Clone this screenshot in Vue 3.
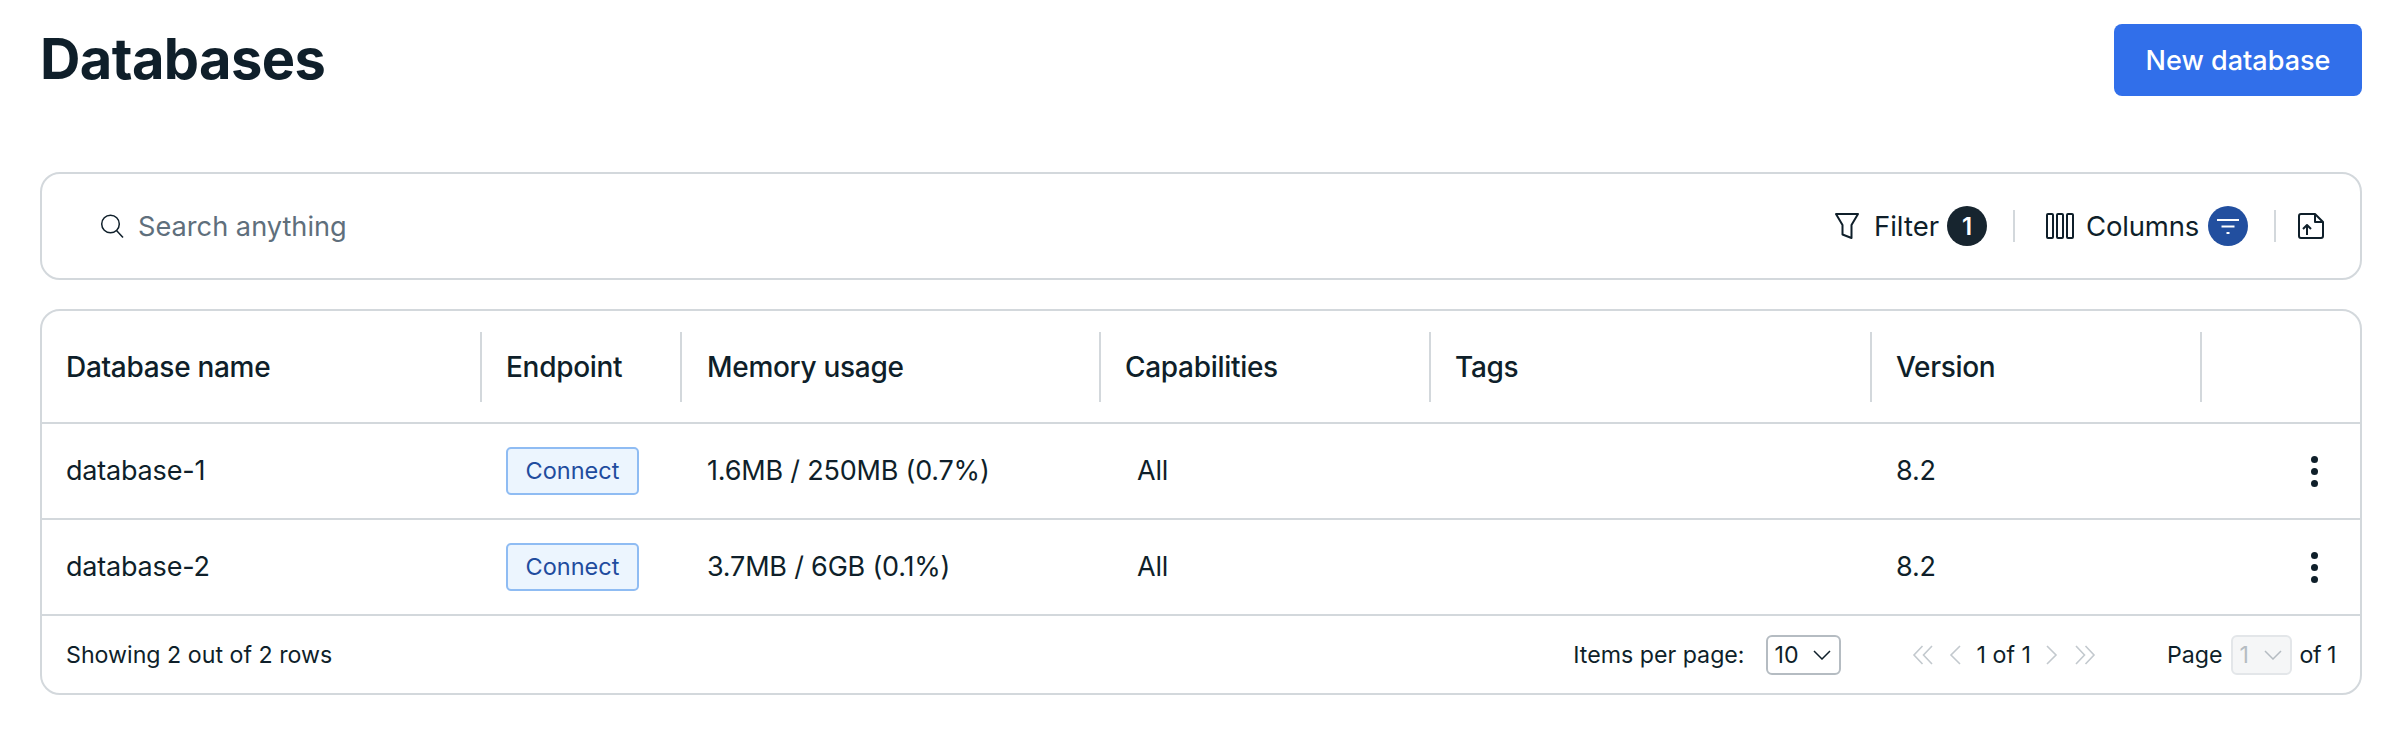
<template>
  <div class="page">
    <header class="page-header">
      <h1>Databases</h1>
      <button class="primary-btn">New database</button>
    </header>

    <div class="toolbar">
      <div class="search">
        <svg class="search-icon" viewBox="0 0 24 24" fill="none" stroke="#0f1f2a" stroke-width="1.5">
          <circle cx="10.500" cy="10" r="8.800" />
          <path d="M16.500 16.500l6.500 7" />
        </svg>
        <span class="search-text">Search anything</span>
      </div>
      <div class="tools">
        <div class="tool">
          <svg class="icon filter-icon" viewBox="0 0 24 26" fill="none" stroke="#0f1f2a" stroke-width="2" stroke-linejoin="round">
            <path d="M1 1h22l-6.500 11v13L7.500 21.500V12z" />
          </svg>
          <span class="tool-label">Filter</span>
          <span class="badge dark">1</span>
        </div>
        <span class="divider first"></span>
        <div class="tool columns-tool">
          <svg class="icon columns-icon" viewBox="0 0 28 26" fill="none" stroke="#0f1f2a" stroke-width="2">
            <rect x="1" y="1" width="6" height="24" rx="1" />
            <rect x="11" y="1" width="6" height="24" rx="1" />
            <rect x="21" y="1" width="6" height="24" rx="1" />
          </svg>
          <span class="tool-label columns-label">Columns</span>
          <span class="badge blue">
            <svg viewBox="0 0 22 16" width="22" height="16" fill="none" stroke="#fff" stroke-width="2">
              <path d="M0 2h22M4.500 8.500h13M9.500 15h3" />
            </svg>
          </span>
        </div>
        <span class="divider last"></span>
        <svg class="icon upload-icon" viewBox="0 0 26 26" fill="none" stroke="#0f1f2a" stroke-width="2" stroke-linejoin="round">
          <path d="M3 1h14l8 8v14a2 2 0 0 1-2 2H3a2 2 0 0 1-2-2V3a2 2 0 0 1 2-2z" />
          <path d="M17 1v8h8" />
          <path d="M9 22V12M5 16l4-4 4 4" />
        </svg>
      </div>
    </div>

    <div class="table-card">
      <div class="row head">
        <div v-for="col in columns" :key="col" class="cell"><span class="head-text">{{ col }}</span></div>
        <div class="cell"></div>
      </div>
      <div v-for="db in databases" :key="db.name" class="row body">
        <div class="cell text">{{ db.name }}</div>
        <div class="cell"><button class="connect">Connect</button></div>
        <div class="cell text">{{ db.memory }}</div>
        <div class="cell text caps">All</div>
        <div class="cell"></div>
        <div class="cell text">{{ db.version }}</div>
        <div class="cell kebab-cell">
          <span class="kebab"><i></i><i></i><i></i></span>
        </div>
      </div>
      <footer class="table-footer">
        <span>Showing 2 out of 2 rows</span>
        <div class="pager">
          <span>Items per page:</span>
          <span class="select per-page">10
            <svg viewBox="0 0 18 10" width="18" height="10" fill="none" stroke="#0f1f2a" stroke-width="1.500"><path d="M1 1l8 8 8-8" /></svg>
          </span>
          <div class="nav">
            <svg viewBox="0 0 22 20" width="22" height="20" fill="none" stroke="#c3c9ce" stroke-width="1.600"><path d="M10.500 1L2 10l8.500 9M20 1l-8.500 9 8.500 9" /></svg>
            <svg viewBox="0 0 12 20" width="12" height="20" fill="none" stroke="#c3c9ce" stroke-width="1.600"><path d="M11 1L2 10l9 9" /></svg>
            <span class="page-of">1 of 1</span>
            <svg viewBox="0 0 12 20" width="12" height="20" fill="none" stroke="#c3c9ce" stroke-width="1.600"><path d="M1 1l9 9-9 9" /></svg>
            <svg viewBox="0 0 22 20" width="22" height="20" fill="none" stroke="#c3c9ce" stroke-width="1.600"><path d="M2 1l8.500 9-8.500 9M11.500 1l8.500 9-8.500 9" /></svg>
          </div>
          <div class="page-pick">
            <span>Page</span>
            <span class="select disabled">1
              <svg viewBox="0 0 18 10" width="18" height="10" fill="none" stroke="#b5bcc2" stroke-width="1.500"><path d="M1 1l8 8 8-8" /></svg>
            </span>
            <span class="of-total">of 1</span>
          </div>
        </div>
      </footer>
    </div>
  </div>
</template>

<script setup>
const columns = ['Database name', 'Endpoint', 'Memory usage', 'Capabilities', 'Tags', 'Version']

const databases = [
  { name: 'database-1', memory: '1.6MB / 250MB (0.7%)', version: '8.2' },
  { name: 'database-2', memory: '3.7MB / 6GB (0.1%)', version: '8.2' }
]
</script>

<style scoped>
.page {
  width: 2400px;
  height: 740px;
  box-sizing: border-box;
  padding: 24px 38px 0 40px;
  background: #fff;
  color: #0f1f2a;
  font-family: Inter, "Liberation Sans", sans-serif;
  font-size: 27px;
}

.page-header {
  display: flex;
  align-items: center;
  justify-content: space-between;
  height: 72px;
  margin-bottom: 76px;
}

h1 {
  margin: 0;
  font-size: 56px;
  font-weight: 700;
  letter-spacing: -0.6px;
  line-height: 68px;
  padding-bottom: 2px;
}

.primary-btn {
  width: 248px;
  height: 72px;
  border: none;
  border-radius: 8px;
  background: #316fea;
  color: #fff;
  font: inherit;
  font-weight: 500;
}

.toolbar {
  display: flex;
  align-items: center;
  justify-content: space-between;
  box-sizing: border-box;
  height: 108px;
  margin-bottom: 29px;
  padding: 0 36px 0 58px;
  border: 2px solid #d3d8dc;
  border-radius: 20px;
}

.search {
  display: flex;
  align-items: center;
  gap: 14px;
}

.search-icon {
  width: 24px;
  height: 24px;
}

.search-text {
  color: #5f6f7c;
  font-size: 27.200px;
}

.tools {
  display: flex;
  align-items: center;
}

.tool {
  display: flex;
  align-items: center;
}

.tool-label {
  font-size: 27.500px;
}

.columns-label {
  letter-spacing: -0.2px;
}

.icon {
  display: block;
  height: 26px;
}

.filter-icon {
  width: 24px;
  margin-right: 15px;
}

.columns-icon {
  width: 28px;
  margin-right: 12px;
}

.upload-icon {
  width: 26px;
}

.badge {
  display: flex;
  align-items: center;
  justify-content: center;
  width: 40px;
  height: 40px;
  margin-left: 9px;
  border-radius: 50%;
  color: #fff;
  font-size: 24px;
  font-weight: 600;
}

.badge.dark {
  margin-left: 8px;
  background: #17252f;
}

.badge.blue {
  background: #224f9f;
}

.divider {
  width: 2px;
  height: 32px;
  margin: 0 26px;
  background: #d3d8dc;
}

.divider.first {
  margin-right: 31px;
}

.divider.last {
  margin-right: 22px;
}

.table-card {
  box-sizing: border-box;
  height: 386px;
  border: 2px solid #d3d8dc;
  border-radius: 20px;
}

.row {
  display: grid;
  grid-template-columns: 440px 200px 419px 330px 441px 330px 1fr;
  border-bottom: 2px solid #d3d8dc;
}

.row.head {
  height: 113px;
  box-sizing: border-box;
  align-items: center;
  font-size: 28px;
  font-weight: 500;
  letter-spacing: -0.3px;
}

.row.body {
  height: 96px;
  box-sizing: border-box;
  align-items: center;
  letter-spacing: -0.2px;
}

.cell {
  padding-left: 24px;
}

.cell:nth-child(3) {
  padding-left: 25px;
}

.cell.text {
  padding-bottom: 2px;
}

.head .cell {
  display: flex;
  align-items: center;
  box-sizing: border-box;
  height: 70px;
  border-right: 2px solid #d3d8dc;
}

.head .cell:last-child {
  border-right: none;
}

.cell.caps {
  padding-left: 36px;
}

.connect {
  display: block;
  width: 133px;
  height: 48px;
  border: 2px solid #8fbcf3;
  border-radius: 5px;
  background: #ecf5fe;
  color: #1f4c9e;
  font: inherit;
  font-size: 23.500px;
  padding: 0 0 2px;
}

.kebab-cell {
  display: flex;
  justify-content: flex-end;
  padding-right: 42px;
}

.kebab {
  display: flex;
  flex-direction: column;
  gap: 5px;
}

.kebab i {
  display: block;
  width: 7px;
  height: 7px;
  border-radius: 50%;
  background: #0f1f2a;
}

.table-footer {
  display: flex;
  align-items: center;
  justify-content: space-between;
  height: 78px;
  padding: 0 24px;
  font-size: 23.200px;
}

.pager {
  display: flex;
  align-items: center;
}

.select {
  display: flex;
  align-items: center;
  justify-content: space-between;
  box-sizing: border-box;
  height: 40px;
  padding: 0 8px 0 7px;
  border: 2px solid #b5bcc2;
  border-radius: 6px;
}

.per-page {
  width: 75px;
  margin-left: 21px;
}

.nav {
  display: flex;
  align-items: center;
  margin-left: 71px;
  gap: 15.500px;
}

.page-pick {
  display: flex;
  align-items: center;
  gap: 8px;
  margin-left: 71px;
}

.of-total {
  letter-spacing: -0.5px;
}

.select.disabled {
  width: 61px;
  border-color: #e3e6e9;
  background: #f5f6f7;
  color: #b5bcc2;
}
</style>
